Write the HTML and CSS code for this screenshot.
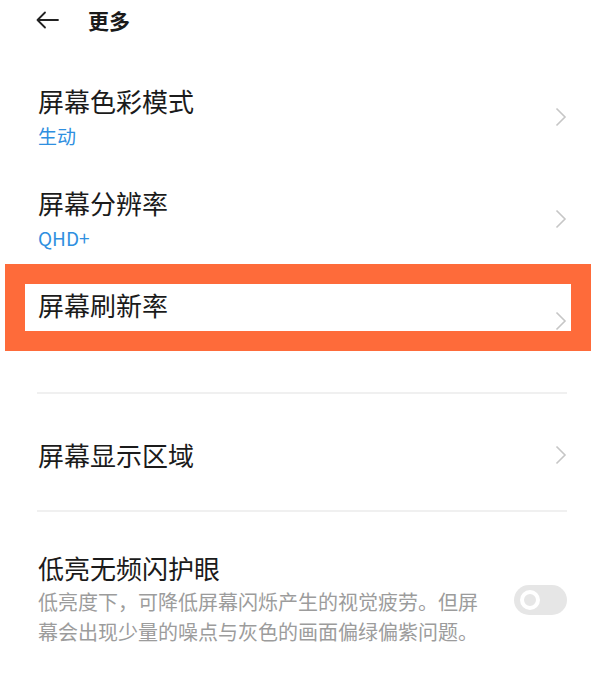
FILE: index.html
```html
<!DOCTYPE html>
<html lang="zh-CN">
<head>
<meta charset="utf-8">
<title>更多</title>
<link rel="stylesheet" href="styles.css">
</head>
<body>
<div class="page">
  <header class="header">
    <svg class="back" width="24" height="18" viewBox="0 0 24 18"><path d="M10 1.5 L2.5 9 L10 16.5 M2.5 9 H23" fill="none" stroke="#222" stroke-width="1.8" stroke-linecap="round" stroke-linejoin="round"/></svg>
    <span class="header-title">更多</span>
  </header>

  <div class="row">
    <div class="text">
      <div class="title">屏幕色彩模式</div>
      <div class="sub">生动</div>
    </div>
    <svg class="chev" width="12" height="20" viewBox="0 0 12 20"><path d="M1.5 1.5 L10 10 L1.5 18.5" fill="none" stroke="#c6c6c6" stroke-width="1.6"/></svg>
  </div>

  <div class="row">
    <div class="text">
      <div class="title">屏幕分辨率</div>
      <div class="sub">QHD+</div>
    </div>
    <svg class="chev" width="12" height="20" viewBox="0 0 12 20"><path d="M1.5 1.5 L10 10 L1.5 18.5" fill="none" stroke="#c6c6c6" stroke-width="1.6"/></svg>
  </div>

  <div class="row">
    <div class="text">
      <div class="title">屏幕刷新率</div>
      <div class="sub"></div>
    </div>
    <svg class="chev" width="12" height="20" viewBox="0 0 12 20"><path d="M1.5 1.5 L10 10 L1.5 18.5" fill="none" stroke="#c6c6c6" stroke-width="1.6"/></svg>
  </div>

  <div class="divider"></div>

  <div class="row row-single">
    <div class="text">
      <div class="title">屏幕显示区域</div>
    </div>
    <svg class="chev" width="12" height="20" viewBox="0 0 12 20"><path d="M1.5 1.5 L10 10 L1.5 18.5" fill="none" stroke="#c6c6c6" stroke-width="1.6"/></svg>
  </div>

  <div class="divider"></div>

  <div class="row row-switch">
    <div class="text">
      <div class="title">低亮无频闪护眼</div>
      <div class="desc">低亮度下，可降低屏幕闪烁产生的视觉疲劳。但屏幕会出现少量的噪点与灰色的画面偏绿偏紫问题。</div>
    </div>
    <div class="switch"><span class="knob"></span></div>
  </div>

  <div class="highlight"></div>
</div>
</body>
</html>
```

FILE: styles.css
```css
* { box-sizing: border-box; }
html, body { margin: 0; padding: 0; background: #fff; }
body {
  font-family: "Noto Sans CJK SC", "Noto Sans", sans-serif;
  color: #1b1b1b;
}
.page {
  position: relative;
  width: 594px;
  height: 673px;
  overflow: hidden;
}
.header {
  height: 40px;
  display: flex;
  align-items: center;
  padding-left: 35px;
}
.back { display: block; }
.header-title {
  margin-left: 29px;
  font-size: 21px;
  font-weight: 700;
  line-height: 30px;
  color: #1a1a1a;
}
.row {
  display: flex;
  align-items: center;
  justify-content: space-between;
  height: 102px;
  padding: 0 27px 0 38px;
}
.header + .row { margin-top: 26px; }
.text { display: flex; flex-direction: column; }
.title {
  font-size: 26px;
  line-height: 30px;
  color: #1b1b1b;
}
.sub {
  margin-top: 8px;
  font-size: 19px;
  line-height: 24px;
  height: 24px;
  color: #2f8fe0;
}
.chev { display: block; flex: none; }
.divider {
  height: 2px;
  background: #f0f0f0;
  margin: 20px 27px 0 37px;
}
.row-single { height: 96px; padding-top: 26px; }
.row-switch { height: 140px; padding-top: 36px; }
.desc {
  margin-top: 4px;
  width: 445px;
  font-size: 20px;
  line-height: 30px;
  color: #9c9c9c;
}
.switch {
  flex: none;
  width: 53px;
  height: 30px;
  border-radius: 15px;
  background: #e6e6e6;
  position: relative;
}
.knob {
  position: absolute;
  left: 6px;
  top: 5px;
  width: 20px;
  height: 20px;
  border-radius: 50%;
  border: 4px solid #fff;
  background: #e6e6e6;
}
.highlight {
  position: absolute;
  left: 5px;
  top: 264px;
  width: 586px;
  height: 87px;
  border: 20px solid #fe6b3a;
  pointer-events: none;
}
```
